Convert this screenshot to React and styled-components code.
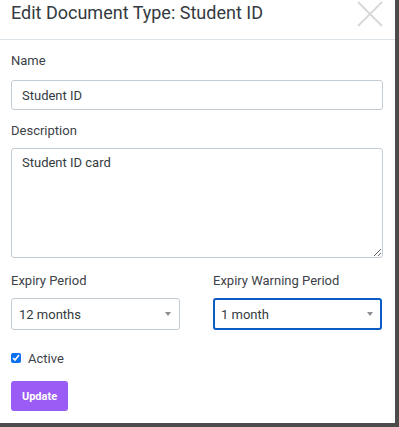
import React from 'react';
import styled, { createGlobalStyle } from 'styled-components';

const Global = createGlobalStyle`
  html, body {
    margin: 0;
    padding: 0;
    background: #4b4b4b;
    font-family: Roboto, "Liberation Sans", sans-serif;
  }
`;

const Modal = styled.div`
  width: 395px;
  height: 423px;
  background: #ffffff;
  box-sizing: border-box;
`;

const Header = styled.div`
  height: 39px;
  border-bottom: 1px solid #dce3e8;
  display: flex;
  align-items: center;
  justify-content: space-between;
  padding: 0 12px 0 11px;
  box-sizing: content-box;
`;

const Title = styled.h2`
  margin: 0;
  font-size: 18px;
  font-weight: 400;
  color: #343a40;
  margin-top: -14px;
`;

const Close = styled.button`
  border: none;
  background: none;
  padding: 0;
  width: 26px;
  height: 26px;
  margin-top: -12px;
  cursor: pointer;
`;

const Body = styled.form`
  padding: 12px 12px 0 11px;
`;

const Field = styled.div`
  margin-bottom: ${p => p.$mb || 12}px;
`;

const Label = styled.label`
  display: block;
  font-size: 13px;
  line-height: 18px;
  color: #3c4248;
  margin-bottom: ${p => p.$mb || 10}px;
`;

const Input = styled.input`
  display: block;
  width: 100%;
  height: 30px;
  box-sizing: border-box;
  border: 1px solid #c3ccd3;
  border-radius: 3px;
  padding: 0 10px;
  font-family: inherit;
  font-size: 13px;
  color: #343a40;
  outline: none;
`;

const TextArea = styled.textarea`
  display: block;
  width: 100%;
  height: 110px;
  box-sizing: border-box;
  border: 1px solid #c3ccd3;
  border-radius: 3px;
  padding: 6px 10px;
  font-family: inherit;
  font-size: 13px;
  color: #343a40;
  resize: vertical;
  outline: none;
  margin: 0;
`;

const Row = styled.div`
  display: grid;
  grid-template-columns: 169px 169px;
  column-gap: 33px;
  margin-bottom: 19px;
`;

const SelectBox = styled.div`
  position: relative;
  height: 32px;
  box-sizing: border-box;
  border: ${p => (p.$focus ? '2px solid #0b5cc4' : '1px solid #c3ccd3')};
  border-radius: 3px;
  display: flex;
  align-items: center;
  padding: 0 ${p => (p.$focus ? 6 : 7)}px;
  font-size: 13px;
  color: #343a40;
  justify-content: space-between;
`;

const Caret = styled.span`
  width: 0;
  height: 0;
  border-left: 3px solid transparent;
  border-right: 3px solid transparent;
  border-top: 4px solid #8a8f94;
  margin-right: 1px;
`;

const CheckRow = styled.label`
  display: flex;
  align-items: center;
  gap: 7px;
  font-size: 13px;
  color: #3c4248;
  margin-bottom: 14px;
  height: 18px;
`;

const Check = styled.input`
  margin: 0;
  width: 10px;
  height: 10px;
  accent-color: #0b6ff0;
`;

const Button = styled.button`
  height: 30px;
  width: 57px;
  border: none;
  border-radius: 3px;
  background: #9a5cf4;
  color: #ffffff;
  font-family: inherit;
  font-size: 11px;
  font-weight: 700;
  cursor: pointer;
`;

const Select = ({ value, focus }) => (
  <SelectBox $focus={focus}>
    <span>{value}</span>
    <Caret />
  </SelectBox>
);

export default function App() {
  return (
    <>
      <Global />
      <Modal>
        <Header>
          <Title>Edit Document Type: Student ID</Title>
          <Close aria-label="Close">
            <svg width="26" height="26" viewBox="0 0 26 26">
              <path d="M1 1 L25 25 M25 1 L1 25" stroke="#d8d8d8" strokeWidth="1.8" />
            </svg>
          </Close>
        </Header>
        <Body onSubmit={e => e.preventDefault()}>
          <Field>
            <Label>Name</Label>
            <Input defaultValue="Student ID" />
          </Field>
          <Field $mb={14}>
            <Label $mb={8}>Description</Label>
            <TextArea defaultValue="Student ID card" />
          </Field>
          <Row>
            <div>
              <Label $mb={8}>Expiry Period</Label>
              <Select value="12 months" />
            </div>
            <div>
              <Label $mb={8}>Expiry Warning Period</Label>
              <Select value="1 month" focus />
            </div>
          </Row>
          <CheckRow>
            <Check type="checkbox" defaultChecked />
            Active
          </CheckRow>
          <Button type="submit">Update</Button>
        </Body>
      </Modal>
    </>
  );
}
